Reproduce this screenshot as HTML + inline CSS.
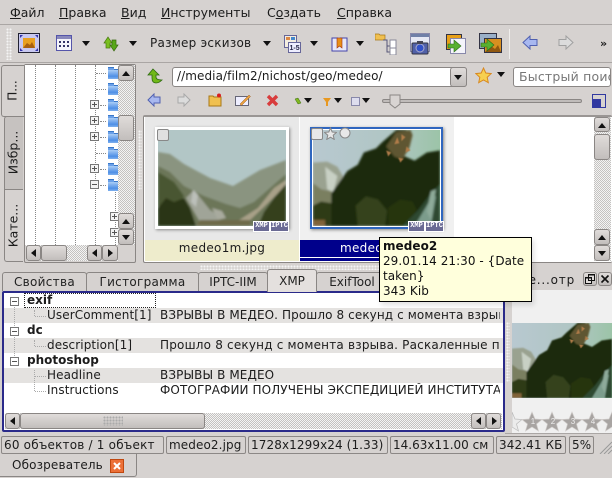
<!DOCTYPE html>
<html><head><meta charset="utf-8"><style>
html,body{margin:0;padding:0}
body{width:612px;height:478px;overflow:hidden;position:relative;background:#d6d2d0;font-family:"DejaVu Sans","Liberation Sans",sans-serif;font-size:12px;color:#1c1c1c}
.a,.t,svg.i{position:absolute}
.t{white-space:nowrap;line-height:15px}
.a{box-sizing:border-box}
u{text-decoration:underline}
.btn{position:absolute;box-sizing:border-box;border:1px solid #8a8684;border-radius:3px;background:linear-gradient(#e0dcda,#c2bebc)}
.tr{position:absolute;box-sizing:border-box;background:repeating-conic-gradient(#c4c2c0 0 25%,#f4f4f4 0 50%) 0 0/2px 2px}
.up:after,.dn:after,.lf:after,.rt:after{content:"";position:absolute;width:0;height:0}
.up:after{left:3px;top:5px;border:4px solid transparent;border-top:0;border-bottom:5px solid #111}
.dn:after{left:3px;top:5px;border:4px solid transparent;border-bottom:0;border-top:5px solid #111}
.lf:after{left:4px;top:3px;border:4px solid transparent;border-left:0;border-right:5px solid #111}
.rt:after{left:5px;top:3px;border:4px solid transparent;border-right:0;border-left:5px solid #111}
.ar{position:absolute;width:0;height:0;border:4.5px solid transparent;border-bottom:0;border-top:5px solid #111}
.fd{position:absolute;left:108px;width:11px;height:9px;margin-top:3px;background:linear-gradient(#a9cdf5,#4f8fe6 70%,#7fb0ee);border-top:1px solid #3a78c8}
.fd:before{content:"";position:absolute;left:0;top:-3px;width:6px;height:2px;background:#6aa0e8;border-top:1px solid #3a78c8}
.pl,.mn{position:absolute;box-sizing:border-box;width:9px;height:9px;border:1px solid #777;background:#f4f4f4}
.pl:before,.mn:before{content:"";position:absolute;left:1px;top:3px;width:5px;height:1px;background:#555}
.pl:after{content:"";position:absolute;left:3px;top:1px;width:1px;height:5px;background:#555}
.v{position:absolute;border-left:1px dotted #888;width:0}
.h{position:absolute;border-top:1px dotted #888;height:0}
.tab{position:absolute;box-sizing:border-box;top:272px;height:19px;border:1px solid #8a8684;border-bottom:0;border-radius:3px 3px 0 0;text-align:center;line-height:18px;background:#d6d2d0;color:#222}
.cell{position:absolute;box-sizing:border-box;top:436px;height:18px;border:1px solid #8c8886;border-radius:2px;line-height:16px;padding-left:2px;white-space:nowrap;overflow:hidden;letter-spacing:.1px}
.band{position:absolute;left:4px;width:499px;height:15px;background:#e4e2e0}
.badge{position:absolute;box-sizing:border-box;height:11px;top:221px;background:#6a6a94;border:1px solid #fff;color:#fff;font:bold 7px/9px "Liberation Mono",monospace;text-align:center}
.dots{position:absolute;background:radial-gradient(circle,#f4f4f4 1px,transparent 1.1px) 0 0/3px 3px}
</style></head><body>

<!-- menu -->
<div class="t" style="left:10px;top:5px;font-size:12.5px"><u>Ф</u>айл</div>
<div class="t" style="left:59px;top:5px;font-size:12.5px"><u>П</u>равка</div>
<div class="t" style="left:121px;top:5px;font-size:12.5px"><u>В</u>ид</div>
<div class="t" style="left:161px;top:5px;font-size:12.5px"><u>И</u>нструменты</div>
<div class="t" style="left:267px;top:5px;font-size:12.5px">С<u>о</u>здать</div>
<div class="t" style="left:337px;top:5px;font-size:12.5px"><u>С</u>правка</div>
<div class="a" style="left:0;top:24px;width:612px;height:1px;background:#aaa6a4"></div>

<!-- toolbar -->
<div class="dots" style="left:6px;top:28px;width:6px;height:32px"></div>
<svg class="i" style="left:18px;top:33px" width="22" height="20"><rect x=".5" y=".5" width="21" height="19" fill="#c8c8f0" stroke="#223"/><rect x="5" y="5" width="12" height="10" fill="#e8a020"/><path d="M5 15l4-5 3 2 2-3 3 6z" fill="#a86010"/><path d="M2 2l3 0-3 3zM20 2l-3 0 3 3zM2 18l3 0-3-3zM20 18l-3 0 3-3z" fill="#33a"/></svg>
<svg class="i" style="left:56px;top:35px" width="16" height="16"><rect x=".5" y=".5" width="15" height="15" fill="#f4f4fa" stroke="#55a"/><rect x="1" y="1" width="14" height="3" fill="#88b"/><path d="M3 6h2v2H3zM7 6h2v2H7zM11 6h2v2h-2zM3 10h2v2H3zM7 10h2v2H7zM11 10h2v2h-2z" fill="#336"/></svg>
<div class="ar" style="left:82px;top:41px"></div>
<svg class="i" style="left:103px;top:36px" width="16" height="16"><path d="M1 7l4-6 4 6H7v5H3V7z" fill="#7ac020" stroke="#4a7a10" stroke-width=".7"/><path d="M15 9l-4 6-4-6h2V4h4v5z" fill="#58a818" stroke="#3a6a10" stroke-width=".7"/></svg>
<div class="ar" style="left:129px;top:41px"></div>
<div class="t" style="left:150px;top:36px;font-size:12px;letter-spacing:.25px">Размер эскизов</div>
<div class="ar" style="left:263px;top:41px"></div>
<svg class="i" style="left:284px;top:35px" width="17" height="18"><rect x=".5" y=".5" width="12" height="12" fill="#f4eee0" stroke="#669"/><rect x="2" y="2" width="4" height="3" fill="#d84"/><rect x="7" y="2" width="4" height="3" fill="#48c"/><rect x="4.500" y="7.500" width="12" height="10" fill="#eef" stroke="#669"/><text x="5.500" y="15" font-size="7" font-weight="bold" font-family="Liberation Sans" fill="#224">1-5</text></svg>
<div class="ar" style="left:310px;top:41px"></div>
<svg class="i" style="left:331px;top:36px" width="17" height="16"><path d="M1 2h6l1 1 1-1h7v13H1z" fill="#e8e8f8" stroke="#44a"/><path d="M6 2h5v10l-2.500-2L6 12z" fill="#e89018" stroke="#a03010" stroke-width=".6"/></svg>
<div class="ar" style="left:356px;top:41px"></div>
<svg class="i" style="left:375px;top:32px" width="23" height="23"><path d="M0 2h4l1 1h5v5H0z" fill="#f0c050" stroke="#a87818" stroke-width=".7"/><path d="M8 8h4v6h3M12 14v6h3" fill="none" stroke="#557"/><rect x="15" y="8" width="6" height="8" fill="#fff" stroke="#889"/><rect x="15" y="16" width="6" height="7" fill="#fff" stroke="#889"/></svg>
<svg class="i" style="left:410px;top:33px" width="20" height="22"><rect x=".5" y=".5" width="19" height="18" fill="#e6e8f4" stroke="#88a"/><rect x="1" y="1" width="18" height="3" fill="#7080a8"/><rect x="2" y="10" width="16" height="11" rx="1" fill="#5060a8" stroke="#334"/><circle cx="10" cy="15" r="4" fill="#3050c8" stroke="#aac"/><rect x="7" y="8" width="6" height="3" fill="#445"/></svg>
<svg class="i" style="left:446px;top:34px" width="20" height="20"><rect x=".5" y=".5" width="15" height="15" fill="#e8a018" stroke="#334"/><rect x="4.500" y="4.500" width="15" height="15" fill="#f4f4fa" stroke="#88a"/><path d="M2 10h6V6l7 6-7 6v-4H2z" fill="#58b030" stroke="#2a6a18" stroke-width=".6"/></svg>
<svg class="i" style="left:479px;top:33px" width="23" height="20"><rect x=".5" y=".5" width="17" height="15" fill="#9ab0c8" stroke="#334"/><rect x="5.500" y="5.500" width="17" height="14" fill="#d89020" stroke="#334"/><path d="M6 19l6-6 4 3 3-4 3 7z" fill="#905810"/><path d="M2 10h6V6l7 6-7 6v-4H2z" fill="#58b030" stroke="#2a6a18" stroke-width=".6"/></svg>
<div class="a" style="left:509px;top:29px;width:1px;height:30px;background:#f0eeec"></div>
<svg class="i" style="left:522px;top:35px" width="16" height="15"><path d="M1 7.500L8 1v3.500h7v6H8V14z" fill="#a8b8f0" stroke="#5060b0"/></svg>
<svg class="i" style="left:558px;top:35px" width="16" height="15"><path d="M15 7.500L8 1v3.500H1v6h7V14z" fill="#dcdcdc" stroke="#a0a0a0"/></svg>
<div class="t" style="left:600px;top:36px;font-size:11px;font-weight:bold">»</div>
<div class="a" style="left:0;top:62px;width:612px;height:1px;background:#aaa6a4"></div>

<!-- left tabs -->
<div class="a" style="left:1px;top:65px;width:23px;height:52px;background:#d6d2d0;border:1px solid #8a8684;border-right:0;border-radius:3px 0 0 3px"></div>
<div class="a" style="left:4px;top:116px;width:19px;height:74px;background:#c6c2c0;border:1px solid #8a8684;border-right:0;border-radius:3px 0 0 0"></div>
<div class="a" style="left:4px;top:189px;width:19px;height:73px;background:#d6d2d0;border:1px solid #8a8684;border-right:0;border-radius:0 0 0 3px"></div>
<div class="t" style="left:-12px;top:83px;width:50px;text-align:center;transform:rotate(-90deg)">П...</div>
<div class="t" style="left:-12px;top:145px;width:50px;text-align:center;transform:rotate(-90deg);font-size:12.5px">Избр...</div>
<div class="t" style="left:-12px;top:218px;width:50px;text-align:center;transform:rotate(-90deg);font-size:12.5px">Кате...</div>

<!-- tree -->
<div class="a" style="left:24px;top:64px;width:112px;height:199px;background:#d6d2d0;border:1px solid #8a8684;border-radius:2px"></div>
<div class="a" style="left:25px;top:65px;width:93px;height:180px;background:#fff;overflow:hidden"></div>
<div class="v" style="left:35px;top:65px;height:180px"></div>
<div class="v" style="left:55px;top:65px;height:180px"></div>
<div class="v" style="left:75px;top:65px;height:180px"></div>
<div class="v" style="left:95px;top:65px;height:180px"></div>
<div class="v" style="left:115px;top:190px;height:55px"></div>
<div class="h" style="left:96px;top:73px;width:10px"></div>
<div class="h" style="left:96px;top:89px;width:10px"></div>
<div class="h" style="left:100px;top:105px;width:6px"></div>
<div class="h" style="left:100px;top:121px;width:6px"></div>
<div class="h" style="left:100px;top:137px;width:6px"></div>
<div class="h" style="left:96px;top:153px;width:10px"></div>
<div class="h" style="left:100px;top:169px;width:6px"></div>
<div class="h" style="left:100px;top:185px;width:6px"></div>
<div class="fd" style="top:66px"></div><div class="fd" style="top:82px"></div><div class="fd" style="top:98px"></div><div class="fd" style="top:114px"></div><div class="fd" style="top:130px"></div><div class="fd" style="top:146px"></div><div class="fd" style="top:162px"></div><div class="fd" style="top:178px"></div>
<div class="pl" style="left:90px;top:100px"></div><div class="pl" style="left:90px;top:116px"></div><div class="pl" style="left:90px;top:132px"></div><div class="pl" style="left:90px;top:164px"></div><div class="mn" style="left:90px;top:180px"></div>
<div class="pl" style="left:110px;top:212px"></div><div class="pl" style="left:110px;top:228px"></div>
<div class="tr" style="left:118px;top:65px;width:17px;height:180px"></div>
<div class="btn up" style="left:118px;top:65px;width:16px;height:16px"></div>
<div class="btn" style="left:118px;top:115px;width:16px;height:26px"></div>
<div class="btn up" style="left:118px;top:213px;width:16px;height:16px"></div>
<div class="btn dn" style="left:118px;top:229px;width:16px;height:16px"></div>
<div class="tr" style="left:26px;top:245px;width:92px;height:16px"></div>
<div class="btn lf" style="left:26px;top:245px;width:15px;height:16px"></div>
<div class="btn" style="left:41px;top:245px;width:26px;height:16px"></div>
<div class="btn lf" style="left:87px;top:245px;width:15px;height:16px"></div>
<div class="btn rt" style="left:102px;top:245px;width:16px;height:16px"></div>
<div class="dots" style="left:138px;top:130px;width:4px;height:60px"></div>

<!-- address row -->
<svg class="i" style="left:146px;top:68px" width="17" height="17"><path d="M7 1l6 6h-3v2c0 2 2 3 6 3-2 2-4 3-6 3-3 0-4-2-4-5V7H2z" fill="#70b818" stroke="#2e6a10" stroke-width=".8"/></svg>
<div class="a" style="left:172px;top:67px;width:295px;height:20px;background:#fff;border:1px solid #8a8684;border-radius:3px"></div>
<div class="t" style="left:177px;top:69px;font-size:12px;letter-spacing:.08px">//media/film2/nichost/geo/medeo/</div>
<div class="btn" style="left:450px;top:67px;width:17px;height:20px"></div>
<div class="ar" style="left:454px;top:75px"></div>
<svg class="i" style="left:475px;top:67px" width="17" height="17"><path d="M8.500 1l2.300 5 5.400.6-4 3.700 1.100 5.400-4.800-2.700-4.800 2.700 1.100-5.400-4-3.700L6.200 6z" fill="#f6d050" stroke="#d88820"/></svg>
<div class="ar" style="left:497px;top:72px"></div>
<div class="a" style="left:513px;top:67px;width:98px;height:20px;background:#fff;border:1px solid #8a8684;border-radius:3px;overflow:hidden"><div class="t" style="left:5px;top:1px;color:#777;font-size:12.5px;letter-spacing:.2px">Быстрый поиск</div></div>

<!-- nav row -->
<svg class="i" style="left:147px;top:93px" width="14" height="14"><path d="M1 7l6-6v3h6v6H7v3z" fill="#a8b8f0" stroke="#5060b0"/></svg>
<svg class="i" style="left:177px;top:93px" width="14" height="14"><path d="M13 7L7 1v3H1v6h6v3z" fill="#dcdcdc" stroke="#a8a8a8"/></svg>
<svg class="i" style="left:208px;top:93px" width="14" height="14"><path d="M1 3h4l1 1h7v9H1z" fill="#f0c050" stroke="#a87818"/><circle cx="11" cy="2.500" r="2" fill="#d82020"/></svg>
<svg class="i" style="left:235px;top:93px" width="16" height="14"><rect x=".5" y="3.500" width="13" height="9" fill="#eef" stroke="#667"/><path d="M5 11l9-9 1.500 1.500-9 9z" fill="#e8a040" stroke="#a06020" stroke-width=".5"/></svg>
<svg class="i" style="left:266px;top:94px" width="13" height="13"><path d="M2 2l9 9M11 2l-9 9" stroke="#d83c3c" stroke-width="3.400"/></svg>
<svg class="i" style="left:294px;top:97px" width="8" height="8"><path d="M1 2l3-1 3 5-3 1z" fill="#80b820" stroke="#3a6a10" stroke-width=".5"/></svg>
<div class="ar" style="left:304px;top:98px"></div>
<svg class="i" style="left:323px;top:97px" width="8" height="10"><path d="M0 1h8L5 5v4H3V5z" fill="#e89820"/></svg>
<div class="ar" style="left:334px;top:98px"></div>
<div class="a" style="left:351px;top:97px;width:9px;height:9px;background:#dde;border:1px solid #88a"></div>
<div class="ar" style="left:362px;top:98px"></div>
<div class="a" style="left:382px;top:99px;width:200px;height:4px;background:#c0bcba;border:1px solid #8a8684;border-radius:2px"></div>
<svg class="i" style="left:389px;top:94px" width="12" height="15"><path d="M1 1h10v9l-5 4-5-4z" fill="#d8d4d2" stroke="#8a8684"/></svg>
<svg class="i" style="left:592px;top:94px" width="14" height="14"><rect x=".5" y=".5" width="13" height="13" fill="none" stroke="#3038a0"/><rect x="0" y="5" width="9" height="9" fill="#3038a0"/></svg>

<!-- thumbnails -->
<div class="a" style="left:143px;top:115px;width:469px;height:148px;background:#fff;border:1px solid #8a8684;border-right:0;border-top:2px solid #9a9694;border-radius:2px"></div>
<div class="a" style="left:145px;top:117px;width:154px;height:123px;background:#e8e8e8"></div>
<div class="a" style="left:145px;top:240px;width:154px;height:21px;background:#eeeccc"></div>
<div class="a" style="left:300px;top:117px;width:154px;height:123px;background:#f0f0f0"></div>
<div class="a" style="left:300px;top:240px;width:154px;height:21px;background:#00008b"></div>
<div class="a" style="left:300px;top:257px;width:154px;height:1px;background:#fff"></div>

<svg width="0" height="0" style="position:absolute"><defs>
<filter id="b" x="-5%" y="-5%" width="110%" height="110%"><feGaussianBlur stdDeviation="1.1"/></filter>
<filter id="b2" x="-5%" y="-5%" width="110%" height="110%"><feGaussianBlur stdDeviation=".5"/></filter>
<linearGradient id="sk2" x1="0" x2="1" y1="0" y2="0"><stop offset="0" stop-color="#b8c8d0"/><stop offset=".6" stop-color="#b0c6c4"/><stop offset="1" stop-color="#9cc4a8"/></linearGradient>
<symbol id="im2" viewBox="0 0 125 94" preserveAspectRatio="none">
<rect width="125" height="94" fill="url(#sk2)"/>
<g filter="url(#b)">
<path d="M0 32l14-1 10 5 6 10-8 48H0z" fill="#9aa290"/>
<path d="M12 36l2 22 6 3 4-16z" fill="#c8d0c4"/>
<path d="M0 52l8 6 10 2v34H0z" fill="#7a7f60"/>
<path d="M0 74l8-4 12 2v22H0z" fill="#2e3a18"/>
<path d="M18 94V62L28 48 34 40 44 34 50 22 62 18 68 12 75 6 82 0H92V8L88 18 86 24 100 30 112 22 125 20V94z" fill="#1c2a0c"/>
<path d="M72 16L82 2 96 0 98 5 95 17 88 29 80 26z" fill="#5e5630"/>
<path d="M42 74l10-9 12 3 9 11-2 15H44z" fill="#34421c"/>
<path d="M74 76l12-8 12 2 4 8-10 16H74z" fill="#26340f"/>
<path d="M88 94l16-16 12-16 9-9v41z" fill="#2e4a30"/>
<path d="M100 94l12-20 6-10 3 1-5 29z" fill="#7c9c8c"/>
<path d="M116 60l-4 20 4 8 5-30z" fill="#8eaa9a"/>
<path d="M0 88h12v6H0z" fill="#806238"/>
</g>
<g filter="url(#b2)">
<path d="M80 14l3-7 2 6zM87 4l4 3-4 4zM92 16l4 4-5 2zM72 20l5 2-3 4zM84 27l5 1-3 4z" fill="#b07c48"/>
</g>
</symbol>
</defs></svg>

<!-- image 1 -->
<div class="a" style="left:155px;top:127px;width:134px;height:102px;background:#fff;box-shadow:1px 1px 3px #888"></div>
<svg class="i" style="left:158px;top:130px" width="128" height="96" viewBox="0 0 128 96">
<rect width="128" height="96" fill="#b2c6c6"/>
<g filter="url(#b)">
<path d="M0 22l12 2 14 10 26 14 23 8 27-16 26-10v66H0z" fill="#8a9480"/>
<path d="M0 36l12 6 14 14 20 10 22 8 14 4 14-6 32-28v52H0z" fill="#6c7658"/>
<path d="M0 42l16 10 10 14-6 10H0z" fill="#4a5630"/>
<path d="M28 68l8-8 8 10 8 10 10 6-4 6H42z" fill="#a0a498"/>
<path d="M35 60l5 5-2 12-5-5z" fill="#bcc0ba"/>
<path d="M54 78l10 3 4 7-8 2z" fill="#a8aa9e"/>
<path d="M0 78l8-10 8 4 10-4 6 10 6 18H0z" fill="#2c3614"/>
<path d="M78 92l22-14 16-20 12-8v5l-18 18-20 19z" fill="#a8a088"/>
<path d="M100 96l6-14 10-14 12-14v42z" fill="#36401a"/>
<path d="M38 96l4-6h50v6z" fill="#6e6a48"/>
</g></svg>
<div class="a" style="left:157px;top:129px;width:12px;height:12px;background:#e0e0e0;border:1px solid #888;border-radius:2px"></div>
<div class="badge" style="left:253px;width:17px">XMP</div>
<div class="badge" style="left:270px;width:19px">IPTC</div>
<div class="t" style="left:145px;top:241px;width:154px;text-align:center;font-size:12px;letter-spacing:.3px">medeo1m.jpg</div>

<!-- image 2 -->
<div class="a" style="left:310px;top:127px;width:133px;height:102px;background:#2f66bf;box-shadow:1px 1px 3px #888"></div>
<div class="a" style="left:312px;top:129px;width:129px;height:98px;background:#fff"></div>
<svg class="i" style="left:313px;top:130px" width="127" height="96"><use href="#im2" width="127" height="96"/></svg>
<div class="a" style="left:311px;top:128px;width:12px;height:12px;background:#e8e8e8;border:1px solid #888;border-radius:2px"></div>
<svg class="i" style="left:324px;top:127px" width="13" height="13"><path d="M6.500 1l1.700 4 4.300.4-3.300 2.800 1 4.200-3.700-2.200-3.700 2.200 1-4.200L.5 5.400 4.800 5z" fill="#e8e8e8" stroke="#888"/></svg>
<svg class="i" style="left:339px;top:127px" width="12" height="12"><circle cx="6" cy="6" r="5" fill="#e8e8e8" stroke="#888"/></svg>
<div class="badge" style="left:408px;width:17px">XMP</div>
<div class="badge" style="left:425px;width:19px">IPTC</div>
<div class="t" style="left:340px;top:241px;color:#fff;letter-spacing:.3px">medeo2.jpg</div>

<!-- thumb scrollbar -->
<div class="tr" style="left:594px;top:117px;width:17px;height:144px"></div>
<div class="btn up" style="left:594px;top:117px;width:16px;height:15px"></div>
<div class="btn" style="left:594px;top:134px;width:16px;height:26px"></div>
<div class="btn up" style="left:594px;top:229px;width:16px;height:16px"></div>
<div class="btn dn" style="left:594px;top:245px;width:16px;height:16px"></div>

<div class="dots" style="left:200px;top:265px;width:300px;height:5px"></div>

<!-- tabs -->
<div class="tab" style="left:2px;width:85px;letter-spacing:.3px">Свойства</div>
<div class="tab" style="left:86px;width:113px;letter-spacing:.3px">Гистограмма</div>
<div class="tab" style="left:198px;width:70px">IPTC-IIM</div>
<div class="tab" style="left:316px;width:72px">ExifTool</div>
<div class="tab" style="left:267px;top:269px;width:50px;height:23px;background:#e4e0de;line-height:22px;z-index:2">XMP</div>

<!-- xmp panel -->
<div class="a" style="left:2px;top:291px;width:503px;height:141px;background:#fff;border:2px solid #2a2a8a;border-radius:2px"></div>
<div class="band" style="top:308px"></div><div class="band" style="top:338px"></div><div class="band" style="top:368px"></div>
<div class="a" style="left:24px;top:293px;width:132px;height:15px;border:1px dotted #222"></div>
<div class="v" style="left:14px;top:300px;height:62px;border-color:#aaa"></div>
<div class="v" style="left:34px;top:310px;height:6px;border-color:#aaa"></div>
<div class="v" style="left:34px;top:340px;height:6px;border-color:#aaa"></div>
<div class="v" style="left:34px;top:370px;height:21px;border-color:#aaa"></div>
<div class="h" style="left:35px;top:316px;width:11px;border-color:#aaa"></div>
<div class="h" style="left:35px;top:346px;width:11px;border-color:#aaa"></div>
<div class="h" style="left:35px;top:376px;width:11px;border-color:#aaa"></div>
<div class="h" style="left:35px;top:391px;width:11px;border-color:#aaa"></div>
<div class="mn" style="left:10px;top:297px;background:#fff"></div><div class="mn" style="left:10px;top:327px;background:#fff"></div><div class="mn" style="left:10px;top:357px;background:#fff"></div>
<div class="t" style="left:27px;top:293px;font-weight:bold">exif</div>
<div class="t" style="left:47px;top:308px;letter-spacing:.1px">UserComment[1]</div>
<div class="t" style="left:160px;top:308px;width:340px;overflow:hidden;letter-spacing:.1px">ВЗРЫВЫ В МЕДЕО. Прошло 8 секунд с момента взрыва</div>
<div class="t" style="left:27px;top:323px;font-weight:bold">dc</div>
<div class="t" style="left:47px;top:338px;letter-spacing:.1px">description[1]</div>
<div class="t" style="left:160px;top:338px;width:341px;overflow:hidden;letter-spacing:.2px">Прошло 8 секунд с момента взрыва. Раскаленные п</div>
<div class="t" style="left:27px;top:353px;font-weight:bold">photoshop</div>
<div class="t" style="left:47px;top:368px;letter-spacing:.1px">Headline</div>
<div class="t" style="left:160px;top:368px;letter-spacing:.1px">ВЗРЫВЫ В МЕДЕО</div>
<div class="t" style="left:47px;top:383px;letter-spacing:.1px">Instructions</div>
<div class="t" style="left:160px;top:383px;width:340px;overflow:hidden;letter-spacing:.1px">ФОТОГРАФИИ ПОЛУЧЕНЫ ЭКСПЕДИЦИЕЙ ИНСТИТУТА</div>
<div class="tr" style="left:5px;top:413px;width:497px;height:16px"></div>
<div class="btn lf" style="left:5px;top:413px;width:15px;height:16px"></div>
<div class="btn" style="left:20px;top:413px;width:185px;height:16px"></div>
<div class="dots" style="left:103px;top:416px;width:20px;height:10px;background-image:radial-gradient(circle,#aaa 1px,transparent 1.1px)"></div>
<div class="btn lf" style="left:471px;top:413px;width:15px;height:16px"></div>
<div class="btn rt" style="left:486px;top:413px;width:15px;height:16px"></div>

<!-- splitter + preview -->
<div class="dots" style="left:506px;top:322px;width:4px;height:60px"></div>
<div class="t" style="left:510px;top:273px;width:65px;text-align:right;letter-spacing:.8px">Пре...отр</div>
<div class="btn" style="left:583px;top:272px;width:14px;height:14px"><svg width="12" height="12" style="display:block"><path d="M4.500 1.500h6v6h-6zM1.500 4.500h6v6h-6z" fill="#e0dcda" stroke="#111"/><path d="M4 2h7M1 5h7" stroke="#111"/></svg></div>
<div class="btn" style="left:598px;top:272px;width:14px;height:14px"><svg width="12" height="12" style="display:block"><path d="M2.500 2.500l7 7M9.500 2.500l-7 7" stroke="#111" stroke-width="1.600"/></svg></div>
<div class="a" style="left:512px;top:290px;width:100px;height:143px;background:#f0f0f0"></div>
<svg class="i" style="left:512px;top:323px" width="100" height="75"><use href="#im2" width="100" height="75"/></svg>
<svg class="i" style="left:512px;top:411px" width="100" height="22"><g fill="#a8a4a2" stroke="#d0ccca" stroke-width=".7"><path d="M0 1l3 7 7 .5-5.500 4.500 2 7-6.500-4z" fill="#ececec" stroke="#bbb"/><path d="M20 1l3 7 7 .5-5.500 4.500 2 7-6.500-4-6.500 4 2-7L10 8.500l7-.5z"/><path d="M40 1l3 7 7 .5-5.500 4.500 2 7-6.500-4-6.500 4 2-7L30 8.500l7-.5z"/><path d="M60 1l3 7 7 .5-5.500 4.500 2 7-6.500-4-6.500 4 2-7L50 8.500l7-.5z"/><path d="M80 1l3 7 7 .5-5.500 4.500 2 7-6.500-4-6.500 4 2-7L70 8.500l7-.5z"/><path d="M100 1l3 7 7 .5-5.500 4.500 2 7-6.500-4-6.500 4 2-7L90 8.500l7-.5z"/></g><g font-family="Liberation Sans" font-size="8" fill="#eee" text-anchor="middle"><text x="21" y="13">1</text><text x="41" y="13">2</text><text x="61" y="13">3</text><text x="81" y="13">4</text></g></svg>
<div class="a" style="left:505px;top:433px;width:107px;height:1px;background:#aaa6a4"></div>

<!-- status -->
<div class="cell" style="left:1px;width:163px;letter-spacing:.2px">60 объектов / 1 объект</div>
<div class="cell" style="left:166px;width:80px">medeo2.jpg</div>
<div class="cell" style="left:248px;width:140px">1728x1299x24 (1.33)</div>
<div class="cell" style="left:390px;width:104px;letter-spacing:0">14.63x11.00 см</div>
<div class="cell" style="left:496px;width:70px">342.41 КБ</div>
<div class="cell" style="left:569px;width:25px">5%</div>
<svg class="i" style="left:599px;top:441px" width="13" height="13"><path d="M1 13L13 1M5 13l8-8M9 13l4-4" stroke="#999"/></svg>

<!-- bottom tab -->
<div class="a" style="left:0;top:454px;width:137px;height:23px;background:#d6d2d0;border:1px solid #8a8684;border-top:0;border-left:0;border-radius:0 0 3px 0"></div>
<div class="t" style="left:12px;top:458px;letter-spacing:.15px">Обозреватель</div>
<svg class="i" style="left:110px;top:459px" width="14" height="14"><rect x=".5" y=".5" width="13" height="13" fill="#ec7038" stroke="#c04810"/><path d="M4 4l6 6M10 4l-6 6" stroke="#fff" stroke-width="2"/></svg>

<!-- tooltip -->
<div class="a" style="left:379px;top:237px;width:153px;height:65px;background:#ffffdc;border:1px solid #000;box-shadow:2px 3px 5px rgba(0,0,0,.12);z-index:5;padding:1px 0 0 3px;line-height:15px;color:#111;white-space:nowrap;letter-spacing:.05px"><b>medeo2</b><br>29.01.14 21:30 - {Date<br>taken}<br>343 Kib</div>
</body></html>
